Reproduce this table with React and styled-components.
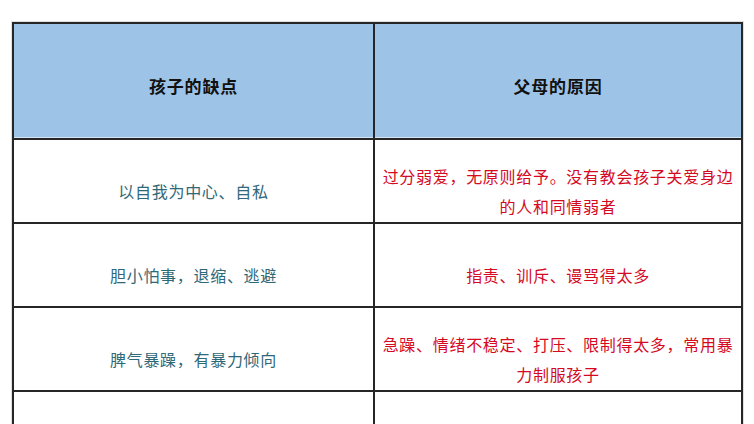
import React from "react";
import styled, { createGlobalStyle } from "styled-components";

const GlobalStyle = createGlobalStyle`
  html, body {
    margin: 0;
    padding: 0;
    background: #ffffff;
    overflow: hidden;
  }
  body {
    font-family: "Noto Sans CJK SC", "Noto Sans", sans-serif;
  }
`;

const Page = styled.div`
  padding: 22px 0 0 12px;
`;

const Table = styled.div`
  display: grid;
  grid-template-columns: 359px 366px;
  grid-auto-rows: 82px;
  grid-template-rows: 114px;
  gap: 2px;
  padding: 2px;
  width: max-content;
  background: #262626;
  box-shadow: 0 0 0 1px rgba(0, 0, 0, 0.12);
`;

const HeadCell = styled.div`
  display: flex;
  align-items: center;
  justify-content: center;
  padding-top: 9px;
  box-sizing: border-box;
  background: #9dc3e6;
  box-shadow: inset 0 -1px 0 #d3e3f1;
  font-size: 17px;
  font-weight: 700;
  letter-spacing: 0.8px;
  color: #111111;
`;

const Cell = styled.div`
  display: flex;
  align-items: center;
  justify-content: center;
  box-sizing: border-box;
  padding: 20px 3px 0;
  background: #ffffff;
  text-align: center;
  font-size: 16px;
  line-height: 30px;
  letter-spacing: 0.7px;
  color: ${(p) => (p.$tone === "red" ? "#d5091f" : "#2f6878")};
`;

const rows = [
  ["以自我为中心、自私", "过分弱爱，无原则给予。没有教会孩子关爱身边的人和同情弱者"],
  ["胆小怕事，退缩、逃避", "指责、训斥、谩骂得太多"],
  ["脾气暴躁，有暴力倾向", "急躁、情绪不稳定、打压、限制得太多，常用暴力制服孩子"],
  ["", ""],
];

export default function App() {
  return (
    <>
      <GlobalStyle />
      <Page>
        <Table>
          <HeadCell>孩子的缺点</HeadCell>
          <HeadCell>父母的原因</HeadCell>
          {rows.map(([fault, cause], i) => (
            <React.Fragment key={i}>
              <Cell>{fault}</Cell>
              <Cell $tone="red">{cause}</Cell>
            </React.Fragment>
          ))}
        </Table>
      </Page>
    </>
  );
}
